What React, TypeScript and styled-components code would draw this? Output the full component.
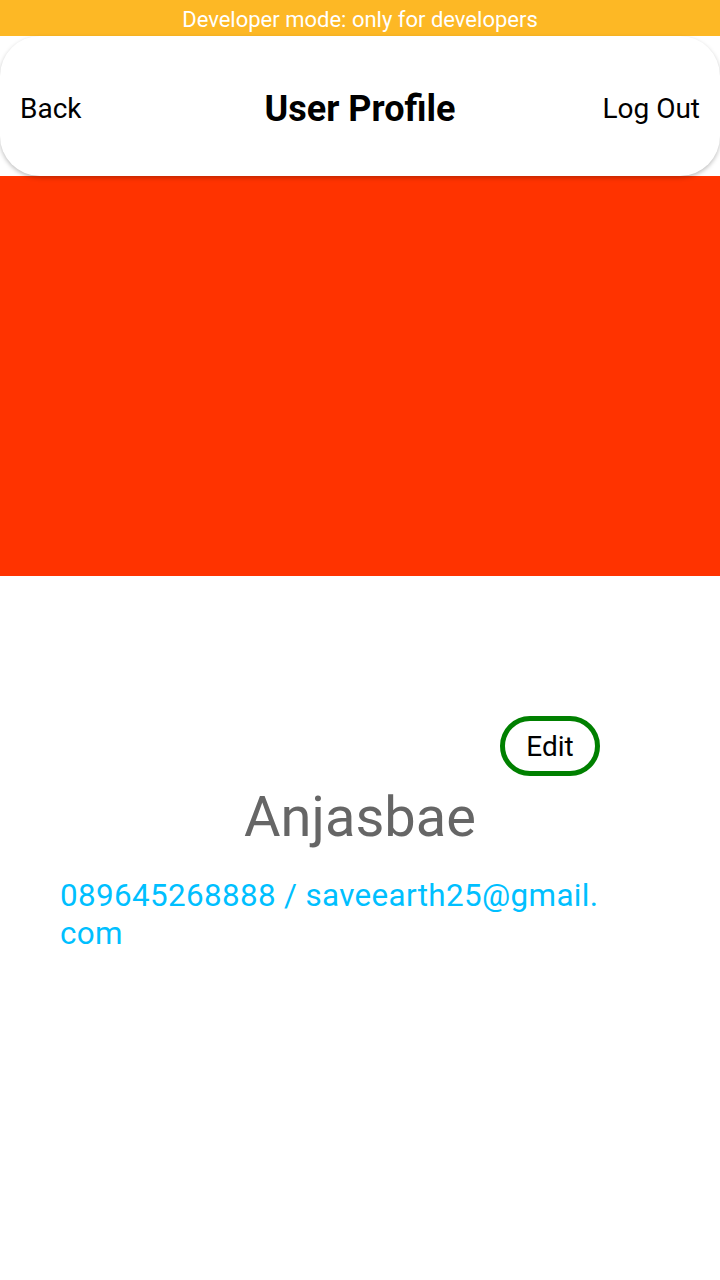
import styled, { createGlobalStyle } from "styled-components";

const GlobalStyle = createGlobalStyle`
  body {
    margin: 0;
    background: #ffffff;
    font-family: Roboto, "Liberation Sans", sans-serif;
  }
`;

const Page = styled.div`
  width: 720px;
  min-height: 1280px;
  background: #ffffff;
`;

const DevBanner = styled.div`
  height: 36px;
  background-color: #fdb825;
  color: #ffffff;
  font-size: 22px;
  line-height: 40px;
  text-align: center;
`;

const Header = styled.header`
  position: relative;
  z-index: 1;
  height: 140px;
  box-sizing: border-box;
  background: #ffffff;
  border-radius: 40px;
  box-shadow: 0 2px 4px rgba(0, 0, 0, 0.25);
  display: grid;
  grid-template-columns: 1fr auto 1fr;
  align-items: center;
  padding: 5px 20px 0;
`;

const NavButton = styled.button<{ $align: "left" | "right" }>`
  justify-self: ${(p) => (p.$align === "left" ? "start" : "end")};
  background: none;
  border: none;
  padding: 0;
  font-family: inherit;
  font-size: 28px;
  color: #000000;
  cursor: pointer;
`;

const Title = styled.h1`
  margin: 0;
  font-size: 36px;
  font-weight: bold;
  color: #000000;
`;

const Cover = styled.div`
  height: 400px;
  background-color: #ff3300;
`;

const Body = styled.section`
  padding: 140px 60px 0;
  display: flex;
  flex-direction: column;
`;

const EditButton = styled.button`
  align-self: flex-end;
  margin-right: 60px;
  width: 100px;
  height: 60px;
  box-sizing: border-box;
  border: 5px solid #008000;
  border-radius: 30px;
  background: #ffffff;
  font-family: inherit;
  font-size: 28px;
  color: #000000;
  cursor: pointer;
`;

const Name = styled.h2`
  margin: 6px 0 0;
  font-size: 56px;
  font-weight: normal;
  color: #666666;
  text-align: center;
  line-height: 70px;
`;

const Contact = styled.p`
  margin: 25px 60px 0 0;
  font-size: 31.4px;
  letter-spacing: 0.35px;
  line-height: 38px;
  color: #00bfff;
`;

export default function App() {
  return (
    <Page>
      <GlobalStyle />
      <DevBanner>Developer mode: only for developers</DevBanner>
      <Header>
        <NavButton $align="left">Back</NavButton>
        <Title>User Profile</Title>
        <NavButton $align="right">Log Out</NavButton>
      </Header>
      <Cover />
      <Body>
        <EditButton>Edit</EditButton>
        <Name>Anjasbae</Name>
        <Contact>
          089645268888 / saveearth25@gmail.
          <wbr />
          com
        </Contact>
      </Body>
    </Page>
  );
}
